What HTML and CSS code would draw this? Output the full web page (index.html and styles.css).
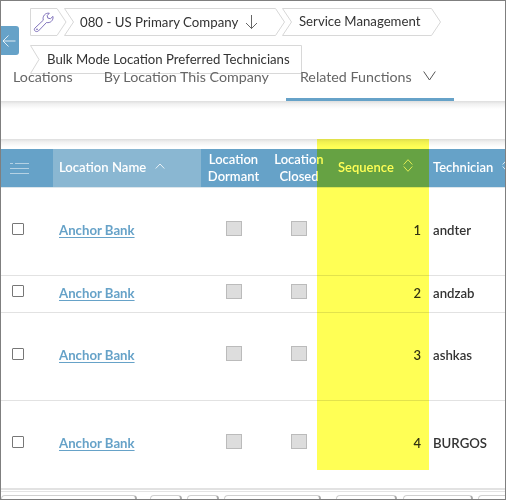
FILE: index.html
```html
<!DOCTYPE html>
<html lang="en">
<head>
<meta charset="utf-8">
<title>Bulk Mode Location Preferred Technicians</title>
<link rel="stylesheet" href="styles.css">
</head>
<body>
<div class="window">
  <button class="back" aria-label="Back"><svg width="14" height="14" viewBox="0 0 14 14"><path d="M13.500 7H1M6.500 1.500L1 7l5.500 5.500"/></svg></button>
  <nav class="crumbs">
    <div class="crumb home">
      <svg class="shape" width="37" height="28"><path d="M.5.5H27L36 14 27 27.500H.5Z"/></svg>
      <svg class="wrench" width="22" height="22" viewBox="0 0 22 22"><path d="M1.800 17.200L10.300 9.200C9.200 5.500 12 1.600 16.300 2.200L14.200 4.600l.6 2.500 2.600.6 2.600-2.300c.6 4-2.700 7-6.500 6.100L5.300 20.100C2.900 21.600.2 19.300 1.800 17.200Z"/><circle cx="4" cy="18.300" r=".5"/></svg>
    </div>
    <div class="crumb company">
      <svg class="shape" width="222" height="28"><path d="M.5.5H211.500L220.500 14 211.500 27.500H.5L9.500 14Z"/></svg>
      <span>080 - US Primary Company</span>
      <svg class="down" width="13" height="15" viewBox="0 0 13 15"><path d="M6.500 0v13.500M1 8l5.500 5.500L12 8"/></svg>
    </div>
    <div class="crumb service">
      <svg class="shape" width="160" height="28"><path d="M.5.5H149.500L158.500 14 149.500 27.500H.5L9.500 14Z"/></svg>
      <span>Service Management</span>
    </div>
  </nav>
  <div class="crumb bulk">
    <svg class="shape" width="272" height="29"><path d="M.5.5H271.500V28.500H.5L9 14.500Z"/></svg>
    <span>Bulk Mode Location Preferred Technicians</span>
  </div>
  <div class="tabs">
    <a class="tab">Locations</a>
    <a class="tab">By Location This Company</a>
    <a class="tab active">Related Functions <svg width="13" height="10" viewBox="0 0 13 10"><path d="M.7.5l5.800 8.500L12.300.5"/></svg></a>
  </div>
  <div class="toolbar"></div>
  <div class="gap"></div>
  <div class="grid head">
    <div><svg class="list" width="19" height="13" viewBox="0 0 19 13"><path d="M0 1.500h3M5 1.500h14M0 6.500h19M0 11.500h19"/></svg></div>
    <div class="sorted"><span>Location Name</span><svg width="10" height="6" viewBox="0 0 10 6"><path d="M.7 5.500L5 1l4.300 4.500"/></svg></div>
    <div class="two dormant"><span>Location<br>Dormant</span></div>
    <div class="two closed"><span>Location<br>Closed</span></div>
    <div class="seq"><span>Sequence</span><svg width="10" height="13" viewBox="0 0 10 13"><path d="M.7 5.500L5 .7 9.300 5.500M.7 7.500L5 12.300 9.300 7.500"/></svg></div>
    <div class="tech"><span>Technician</span><svg width="10" height="13" viewBox="0 0 10 13"><path d="M.7 5.500L5 .7 9.300 5.500M.7 7.500L5 12.300 9.300 7.500"/></svg></div>
  </div>
  <div class="grid row tall">
    <div><i class="check"></i></div><div><a>Anchor Bank</a></div><div><i class="off"></i></div><div><i class="off"></i></div><div class="num">1</div><div>andter</div>
  </div>
  <div class="grid row short">
    <div><i class="check"></i></div><div><a>Anchor Bank</a></div><div><i class="off"></i></div><div><i class="off"></i></div><div class="num">2</div><div>andzab</div>
  </div>
  <div class="grid row third">
    <div><i class="check"></i></div><div><a>Anchor Bank</a></div><div><i class="off"></i></div><div><i class="off"></i></div><div class="num">3</div><div>ashkas</div>
  </div>
  <div class="grid row last">
    <div><i class="check"></i></div><div><a>Anchor Bank</a></div><div><i class="off"></i></div><div><i class="off"></i></div><div class="num">4</div><div>BURGOS</div>
  </div>
  <div class="footer"><i></i><i></i><i></i><i></i><i></i><i></i><i></i></div>
  <div class="highlight"></div>
</div>
</body>
</html>
```
FILE: styles.css
```css
* { box-sizing: border-box; }
body { margin: 0; background: #fff; font-family: Lato, "Liberation Sans", sans-serif; font-size: 13px; color: #333; }
svg { fill: none; stroke: currentColor; flex: none; }
.window { position: relative; width: 506px; height: 500px; border: 1px solid #7f7f7f; overflow: hidden; background: #fff; }
.back { position: absolute; left: 0; top: 25px; width: 18px; height: 29px; border: 0; border-radius: 0 3px 3px 0; background: #66a2c8; color: #fff; padding: 0 0 0 1px; display: flex; align-items: center; }
.back svg { stroke-width: .8; }
.crumbs { display: flex; height: 36px; padding: 7px 0 0 29px; }
.crumb { position: relative; display: flex; align-items: center; height: 28px; color: #333; white-space: nowrap; font-size: 13.250px; }
.crumb span { position: relative; }
.shape { position: absolute; left: 0; top: 0; color: #d8d8d8; overflow: visible; }
.home { width: 34px; }
.wrench { position: relative; margin-left: 3px; color: #7464b4; stroke-width: .9; }
.company { width: 218px; padding-left: 16px; }
.down { position: relative; margin-left: 7px; color: #555; stroke-width: .9; }
.service { padding-left: 17px; }
.service span { top: -1px; font-size: 13.200px; }
.bulk { margin: 8px 0 0 29px; width: 272px; height: 29px; padding-left: 17px; font-size: 13.200px; }
.bulk span { top: -1px; }
.tabs { display: flex; margin-top: -8px; padding-left: 12px; height: 35px; font-size: 14.250px; color: #666; position: relative; }
.tab { padding-top: 2px; height: 35px; white-space: nowrap; margin-right: 31px; }
.tab.active { width: 168px; margin-left: -14px; padding-left: 14px; border-bottom: 3px solid #66a2c8; }
.tab svg { margin-left: 8px; color: #555; position: relative; top: -1px; }
.toolbar { height: 38px; background: linear-gradient(#dedede, #f1f1f1 3px, #fff 8px); }
.gap { height: 10px; background: linear-gradient(#dedede, #f1f1f1 3px, #fff 8px); }
.grid { display: grid; grid-template-columns: 52px 148px 65px 51px 112px 76px; }
.grid > div { display: flex; align-items: center; }
.head { height: 39px; background: #66a2c8; border-bottom: 1px solid #dce6ec; color: #fff; font-weight: 600; white-space: nowrap; }
.head svg { stroke-width: .8; }
.head .list { margin-left: 9px; color: #b5d2e4; stroke-width: 1; }
.head .sorted { background: #8ab7d2; padding: 0 0 3px 6px; font-size: 13.100px; }
.sorted svg { margin-left: 9px; margin-bottom: 2px; }
.head .two { justify-content: center; text-align: center; line-height: 17px; padding-bottom: 1px; }
.head .closed { padding-left: 15px; }
.head .seq { padding: 0 0 2px 21px; }
.seq svg, .tech svg { margin-left: 9px; margin-bottom: 3px; }
.head .tech { padding: 0 0 2px 4px; }
.row { font-weight: 600; border-bottom: 1px solid #e2e2e2; }
.tall, .third { height: 88px; }
.short { height: 37px; }
.last { height: 87px; border: 0; }
.row > div { padding-bottom: 4px; }
.row.short > div, .row.third > div { padding-bottom: 3px; }
.row > div:nth-child(2) { padding-left: 6px; }
.row > div:nth-child(3) { padding-left: 25px; }
.row > div:nth-child(4) { padding-left: 25px; }
.row > div:nth-child(6) { padding-left: 4px; font-size: 13.200px; }
.row .num { justify-content: flex-end; padding-right: 8px; }
.row a { color: #66a2c8; font-weight: 700; font-size: 13.200px; text-decoration: underline; text-underline-offset: 2px; }
.check { width: 12px; height: 12px; border: 1px solid #777; margin: 0 0 1px 11px; border-radius: 1px; }
.short .check, .third .check { margin-bottom: 3px; }
.off { width: 16px; height: 15px; border: 1px solid #bbb; background: #ddd; margin-bottom: 3px; flex: none; }
.footer { height: 13px; border-top: 2px solid #e2e2e2; display: flex; padding-top: 5px; background: linear-gradient(#fff 1px, #e4e4e4 1px, #e4e4e4 2px, #fff 2px); }
.footer i { flex: none; height: 20px; border: 1px solid #d0d0d0; border-right: 2px solid #aaa; border-radius: 4px; width: 32px; margin-right: 5px; }
.footer i:nth-child(1) { width: 136px; margin-right: 13px; }
.footer i:nth-child(4) { width: 97px; margin-right: 15px; }
.footer i:nth-child(5) { width: 61px; margin-right: 6px; }
.footer i:nth-child(6) { width: 70px; }
.footer i:nth-child(7) { width: 60px; }
.highlight { position: absolute; left: 316px; top: 138px; width: 112px; height: 331px; background: #ffff55; mix-blend-mode: multiply; }
```
